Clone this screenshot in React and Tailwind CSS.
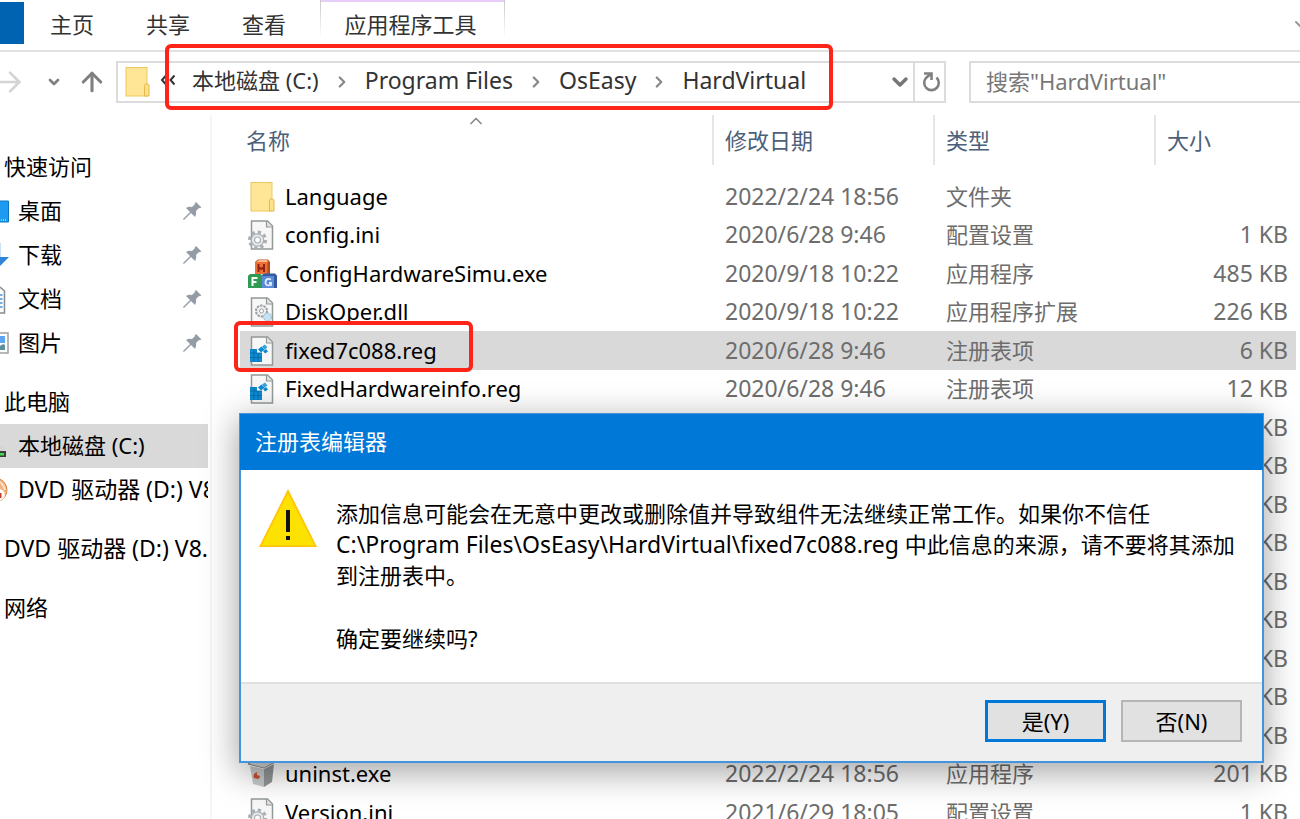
import React from 'react';
import { ChevronDown, ChevronRight, ChevronUp, ArrowRight, ArrowUp } from 'lucide-react';

const FolderIcon = () => (
  <svg viewBox="0 0 30 32" className="h-8 w-[30px] shrink-0">
    <rect x="4" y="1.5" width="21" height="28.5" fill="#ffe596" stroke="#ecc95e" />
    <path d="M22.500 30V19.500q0-1.500 1.500-1.500h1.500q1.500 0 1.500 1.500V30z" fill="#ffe08a" stroke="#e3b94c" />
  </svg>
);

const Sheet = ({ children }) => (
  <svg viewBox="0 0 30 32" className="h-8 w-[30px] shrink-0">
    <path d="M4.500 2h16l5 5v23h-21z" fill="#f7f7f7" stroke="#939996" strokeWidth="1.500" />
    <path d="M19.500 2v6h6" fill="#e2e2e2" stroke="#939996" strokeWidth="1.200" />
    {children}
  </svg>
);

const IniIcon = () => (
  <Sheet>
    <circle cx="10.500" cy="21" r="8" fill="none" stroke="#a9aeb1" strokeWidth="3" strokeDasharray="3.283 3" />
    <circle cx="10.500" cy="21" r="6.200" fill="#e6eaec" stroke="#a9aeb1" strokeWidth="1.200" />
    <circle cx="10.500" cy="21" r="3" fill="#fff" stroke="#a9aeb1" strokeWidth="1.200" />
  </Sheet>
);

const DllIcon = () => (
  <Sheet>
    <circle cx="14.500" cy="15" r="5.500" fill="#edf0f1" stroke="#9a9fa3" strokeWidth="2" strokeDasharray="2.400 1" />
    <circle cx="14.500" cy="15" r="2" fill="#fff" stroke="#9a9fa3" />
    <circle cx="20.500" cy="21" r="4" fill="#c6e2f2" stroke="#8fb9d1" strokeDasharray="2 1" />
  </Sheet>
);

const RegIcon = () => (
  <Sheet>
    <path d="M3 14h7v4h5v9H3z" fill="#0d8ad0" />
    <path d="M3 18h12M3 22.500h12M7 14v13M11 18v9" stroke="#0667a3" strokeWidth="0.800" />
    <path d="m11 14.500 3.500-3 3 3-3.500 3z" fill="#0d8ad0" />
    <path d="m15 11.500 3-2 2.500 3-3 2z" fill="#34a4e0" />
    <path d="m16 16 3-2 2 2.500-3 2z" fill="#0d8ad0" />
  </Sheet>
);

const BlocksIcon = () => (
  <svg viewBox="0 0 30 32" className="h-8 w-[30px] shrink-0">
    <path d="m8 4 3-2.500h10L23 4v12H8z" fill="#b84a1c" />
    <path d="m9 4 3-2h8l1 2z" fill="#f9b98d" />
    <rect x="8" y="4" width="12.500" height="12" fill="#ee7035" />
    <path d="M11.500 6v8M17 6v8M11.500 9l2.700 2L17 9" fill="none" stroke="#8d2316" strokeWidth="2" />
    <path d="m1 18 2-2h11l1 2v12H1z" fill="#2f9a54" />
    <path d="M5.500 28v-8h5M5.500 24h4" fill="none" stroke="#fff" strokeWidth="2" />
    <path d="m15 17 2-1.500h11l2 2V30H15z" fill="#35589e" />
    <path d="M15 18h12v12H15z" fill="#5b8bd8" />
    <path d="M24 21.500q-5-2-5.500 2.500t5.500 3V25h-2" fill="none" stroke="#e4eefc" strokeWidth="1.800" />
  </svg>
);

const UninstallIcon = () => (
  <svg viewBox="0 0 30 32" className="h-8 w-[30px] shrink-0">
    <path d="m1 6 9-4 18 2-11 6z" fill="#d4d7d8" stroke="#888" />
    <path d="m3 8 14 3v18L6 26z" fill="#c6c9ca" />
    <path d="m17 11 10-5-2 18-8 5z" fill="#929697" />
    <path d="M10 14q-5 2-3 6l4 1q2-1 2-3l-3-1z" fill="#c9502e" />
  </svg>
);

const PinIcon = () => (
  <svg viewBox="0 0 20 20" className="mr-[6px] h-5 w-5 shrink-0">
    <path d="m14 1 5.500 5.500-2 .800-.500-.300-3 3q.800 3.500-1 6L9 12l-6.500 6.500-1.500.500.500-1.500L8 11 4 7q2.500-1.800 6-1l3-3-.300-.500z" fill="#949da5" />
  </svg>
);

const RefreshIcon = () => (
  <svg viewBox="0 0 20 22" className="h-[22px] w-5">
    <path d="M15.500 6.500A7.300 7.300 0 1 1 5 7L9.500 3" fill="none" stroke="#808080" strokeWidth="2.600" />
    <path d="M3 2.500h7.500V9" fill="none" stroke="#808080" strokeWidth="2.600" />
  </svg>
);

const OverflowIcon = () => (
  <svg viewBox="0 0 16 12" className="h-3 w-4">
    <path d="M6 1.500 2 6l4 4.500M14.500 1.500 10.500 6l4 4.500" fill="none" stroke="#333" strokeWidth="2" />
  </svg>
);

const DesktopIcon = () => (
  <svg viewBox="0 0 9 30" className="h-[30px] w-[9px]">
    <path d="M-1 5h9.500v21H-1z" fill="#1c9bf0" stroke="#0c75c0" />
    <path d="M1 24h6" stroke="#fff" strokeDasharray="1 1" />
  </svg>
);

const DownloadIcon = () => (
  <svg viewBox="0 0 9 30" className="h-[30px] w-[9px]">
    <path d="M0 3v14" stroke="#c9e0f5" strokeWidth="2" />
    <path d="M0 17h9L0 26z" fill="#2f86d6" />
  </svg>
);

const DocumentIcon = () => (
  <svg viewBox="0 0 9 30" className="h-[30px] w-[9px]">
    <path d="M0 3 4.500 7v22H0" fill="#fafafa" stroke="#8b8b8b" strokeWidth="1.500" />
    <path d="M0 11h2.500M0 15h2.500M0 19h2.500M0 23h2.500" stroke="#4596de" strokeWidth="1.500" />
  </svg>
);

const PictureIcon = () => (
  <svg viewBox="0 0 9 30" className="h-[30px] w-[9px]">
    <path d="M-1 5h9v20h-9z" fill="#fff" stroke="#a0a0a0" strokeWidth="1.500" />
    <path d="M0 8h5v7H0z" fill="#5ea6f4" />
    <path d="M0 18q3-3 5-1v5H0z" fill="#5f8f9c" />
  </svg>
);

const DriveIcon = () => (
  <svg viewBox="0 0 9 30" className="h-[30px] w-[9px]">
    <path d="M0 15h3l3 5H0z" fill="#d5d5d5" />
    <path d="M0 20h6v6H0z" fill="#3a3f3b" />
    <path d="M0 22h4v2.500H0z" fill="#3fd94c" />
  </svg>
);

const DvdIcon = () => (
  <svg viewBox="0 0 9 30" className="h-[30px] w-[9px]">
    <circle cx="-5" cy="15" r="12" fill="#f4b27c" stroke="#d98a4c" />
    <path d="M0 7q4 3 5 8" fill="none" stroke="#fbe0c6" strokeWidth="2" />
    <path d="M0 14a6 6 0 0 1 4 9l-4 3z" fill="#fff" />
    <path d="M0 18h1.500v5H0z" fill="#c93b2b" />
  </svg>
);

const tabs = ['主页', '共享', '查看'];
const crumbs = ['本地磁盘 (C:)', 'Program Files', 'OsEasy', 'HardVirtual'];

const groups = [
  {
    title: '快速访问',
    items: [
      { label: '桌面', Icon: DesktopIcon, pinned: true },
      { label: '下载', Icon: DownloadIcon, pinned: true },
      { label: '文档', Icon: DocumentIcon, pinned: true },
      { label: '图片', Icon: PictureIcon, pinned: true },
    ],
  },
  {
    title: '此电脑',
    items: [
      { label: '本地磁盘 (C:)', Icon: DriveIcon, selected: true },
      { label: 'DVD 驱动器 (D:) V8.', Icon: DvdIcon, wide: true },
    ],
  },
  { title: 'DVD 驱动器 (D:) V8.', items: [], wide: true },
  { title: '网络', items: [] },
];

const coveredRow = { size: 'KB' };

const files = [
  { name: 'Language', Icon: FolderIcon, date: '2022/2/24 18:56', type: '文件夹', size: '' },
  { name: 'config.ini', Icon: IniIcon, date: '2020/6/28 9:46', type: '配置设置', size: '1 KB' },
  { name: 'ConfigHardwareSimu.exe', Icon: BlocksIcon, date: '2020/9/18 10:22', type: '应用程序', size: '485 KB' },
  { name: 'DiskOper.dll', Icon: DllIcon, date: '2020/9/18 10:22', type: '应用程序扩展', size: '226 KB' },
  { name: 'fixed7c088.reg', Icon: RegIcon, date: '2020/6/28 9:46', type: '注册表项', size: '6 KB', selected: true },
  { name: 'FixedHardwareinfo.reg', Icon: RegIcon, date: '2020/6/28 9:46', type: '注册表项', size: '12 KB' },
  ...Array(9).fill(coveredRow),
  { name: 'uninst.exe', Icon: UninstallIcon, date: '2022/2/24 18:56', type: '应用程序', size: '201 KB' },
  { name: 'Version.ini', Icon: IniIcon, date: '2021/6/29 18:05', type: '配置设置', size: '1 KB' },
];

const Ribbon = () => (
  <div className="flex h-[52px] items-start border-b-2 border-[#e2e2e2]">
    <button aria-label="文件" className="mt-[2px] h-[42px] w-6 bg-[#0063b1]" />
    {tabs.map((tab) => (
      <button key={tab} className="h-12 w-[96px] text-center text-[#333]">
        {tab}
      </button>
    ))}
    <div className="ml-2 flex">
      <span className="h-[38px] w-px bg-gradient-to-b from-[#c8c8c8] to-white" />
      <button className="h-12 w-[183px] border-t-2 border-[#e8cdfb] pr-1 pb-[2px] text-center text-[#333]">应用程序工具</button>
      <span className="h-[38px] w-px bg-gradient-to-b from-[#c8c8c8] to-white" />
    </div>
    <div className="ml-auto w-[10px] self-center overflow-hidden">
      <ChevronDown className="h-6 w-6 text-[#999]" />
    </div>
  </div>
);

const AddressBar = () => (
  <div className="flex h-[63px] items-center pb-[3px]">
    <div className="flex w-[116px] items-center text-[#808080]">
      <div className="flex w-[26px] justify-end">
        <ArrowRight className="h-8 w-8 shrink-0 text-[#d4d4d4]" strokeWidth={2} />
      </div>
      <ChevronDown className="ml-5 h-4 w-4" strokeWidth={4} />
      <ArrowUp className="ml-[15px] h-[30px] w-[30px]" strokeWidth={2.5} />
    </div>
    <div className="flex h-[42px] flex-1 items-center border-2 border-[#dcdcdc]">
      <div className="w-[42px] pl-1">
        <FolderIcon />
      </div>
      <button aria-label="更多位置" className="w-8 pb-1">
        <OverflowIcon />
      </button>
      <nav className="flex flex-1 items-center text-[23px] text-[#333]">
        {crumbs.map((crumb, i) => (
          <React.Fragment key={crumb}>
            {i > 0 && <ChevronRight className="mx-[14px] h-[18px] w-[18px] text-[#888]" strokeWidth={3} />}
            <a href="#" className={`pb-1 whitespace-nowrap ${i === 0 ? 'text-[22px]' : ''}`}>{crumb}</a>
          </React.Fragment>
        ))}
      </nav>
      <button aria-label="历史记录" className="px-px">
        <ChevronDown className="h-6 w-6 text-[#777]" strokeWidth={3.5} />
      </button>
      <button aria-label="刷新" className="flex h-full w-[31px] items-center justify-center border-l-2 border-[#dcdcdc] pl-[2px]">
        <RefreshIcon />
      </button>
    </div>
    <input
      type="text"
      aria-label="搜索"
      placeholder={'搜索"HardVirtual"'}
      className="ml-[23px] h-[42px] w-[331px] border-2 border-r-0 border-[#dcdcdc] pb-[2px] pl-[15px] placeholder:text-[#777] placeholder:opacity-100"
    />
  </div>
);

const Sidebar = () => (
  <aside className="flex w-[212px] shrink-0 flex-col gap-[15px] border-r-2 border-[#f5f5f5] pt-[30px] text-black">
    {groups.map((group) => (
      <div key={group.title} className="mr-[2px]">
        <div className={`h-11 overflow-hidden pl-1 leading-[42px] whitespace-nowrap ${group.wide ? 'text-[23px]' : ''}`}>
          {group.title}
        </div>
        {group.items.map(({ label, Icon, pinned, selected, wide }) => (
          <a key={label} href="#" className={`flex h-11 items-center ${selected ? 'bg-[#d9d9d9]' : ''}`}>
            <span className="w-[18px] shrink-0">
              <Icon />
            </span>
            <span className={`flex-1 overflow-hidden pb-[2px] whitespace-nowrap ${wide ? 'text-[23px]' : ''}`}>{label}</span>
            {pinned && <PinIcon />}
          </a>
        ))}
      </div>
    ))}
  </aside>
);

const FileTable = () => (
  <main className="flex-1 pr-1 pl-7">
    <table className="w-full table-fixed border-collapse text-left text-[#6d6d6d]">
      <colgroup>
        <col />
        <col className="w-[221px]" />
        <col className="w-[221px]" />
        <col className="w-[142px]" />
      </colgroup>
      <thead className="text-[#4c607a]">
        <tr>
          <th className="p-0 pb-3 font-normal">
            <div className="relative h-[50px] pl-[6px] leading-[50px]">
              名称
              <ChevronUp className="absolute -top-1 left-1/2 h-5 w-5 -translate-x-1/2 text-[#888]" />
            </div>
          </th>
          {['修改日期', '类型', '大小'].map((head) => (
            <th key={head} className="p-0 pb-3 font-normal">
              <div className="h-[50px] border-l-2 border-[#e5e5e5] pl-[11px] leading-[50px]">{head}</div>
            </th>
          ))}
        </tr>
      </thead>
      <tbody>
        {files.map(({ name, Icon, date, type, size, selected }, i) => (
          <tr key={i} className={`odd:h-[39px] even:h-[38px] ${selected ? 'bg-[#d9d9d9]' : ''}`}>
            <td className="p-0 pl-[7px]">
              {name && (
                <div className="flex h-[38px] items-center gap-2 text-black">
                  <Icon />
                  <span className="pb-[2px]">{name}</span>
                </div>
              )}
            </td>
            <td className="p-0 pb-[2px] pl-[13px] text-[23px]">{date}</td>
            <td className="p-0 pb-[2px] pl-[13px]">{type}</td>
            <td className="p-0 pr-2 pb-[2px] text-right text-[23px]">{size}</td>
          </tr>
        ))}
      </tbody>
    </table>
  </main>
);

const RegistryDialog = () => (
  <div
    role="dialog"
    aria-labelledby="dialog-title"
    className="absolute top-[413px] right-9 left-[239px] border-2 border-[#4295dc] bg-white text-black shadow-[0_8px_32px_2px_rgba(0,0,0,0.35)]"
  >
    <h1 id="dialog-title" className="-mx-px -mt-px h-14 bg-[#0078d7] pl-[15px] leading-[54px] text-white">
      注册表编辑器
    </h1>
    <div className="flex h-[212px] gap-[18px] pt-[18px] pl-[17px]">
      <svg viewBox="0 0 60 60" className="h-[60px] w-[60px] shrink-0">
        <path d="M30 1 59 59H1z" fill="#ffc20e" />
        <path d="M30 5 56.500 57.500h-53z" fill="#fde100" />
        <path d="M28 22h4v22h-4zM28 48h4v4h-4z" fill="#111" />
      </svg>
      <div className="pt-[10px] leading-[31px] whitespace-nowrap">
        <p>
          添加信息可能会在无意中更改或删除值并导致组件无法继续正常工作。如果你不信任
          <br />
          <span className="text-[23px]">C:\Program Files\OsEasy\HardVirtual\fixed7c088.reg</span> 中此信息的来源，请不要将其添加
          <br />
          到注册表中。
        </p>
        <p className="mt-8">确定要继续吗?</p>
      </div>
    </div>
    <div className="flex h-[79px] items-start justify-end gap-[15px] border-t-2 border-[#dfdfdf] bg-[#efefef] pt-4 pr-5">
      <button className="h-[42px] w-[121px] border-[3px] border-[#0078d7] bg-[#e1e1e1]">是(Y)</button>
      <button className="h-[42px] w-[121px] border-2 border-[#b5b5b5] bg-[#e1e1e1]">否(N)</button>
    </div>
  </div>
);

const App = () => {
  return (
    <div className="relative flex h-screen flex-col overflow-hidden bg-white font-['Noto_Sans','Noto_Sans_CJK_SC',sans-serif] text-[22px] leading-[30px]">
      <Ribbon />
      <AddressBar />
      <div className="flex min-h-0 flex-1">
        <Sidebar />
        <FileTable />
      </div>
      <RegistryDialog />

      {/* highlight frames */}
      <div className="pointer-events-none absolute top-11 left-[165px] h-[66px] w-[668px] rounded-md border-4 border-[#ff2418]" />
      <div className="pointer-events-none absolute top-[321px] left-[234px] h-[51px] w-[239px] rounded-md border-4 border-[#ff2418]" />
    </div>
  );
};

export default App;
